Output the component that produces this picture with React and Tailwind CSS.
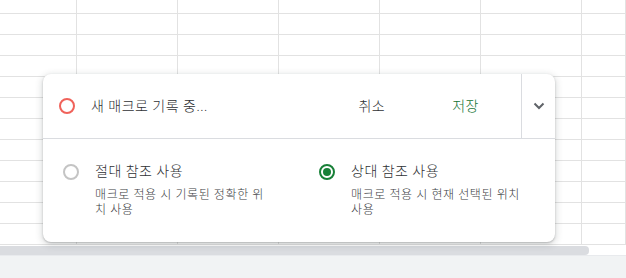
import React from 'react';

const COLS = [77, 101, 101, 101, 101, 101, 44];
const ROWS = 12;

function Grid() {
    return (
        <div className="flex flex-col">
            {Array.from({ length: ROWS }).map((_, r) => (
                <div key={r} className={`flex border-b border-[#e2e2e2] ${r === 0 ? 'h-[14px]' : 'h-[21px]'}`}>
                    {COLS.map((w, c) => (
                        <div key={c} style={{ width: w }} className="shrink-0 border-r border-[#e2e2e2]" />
                    ))}
                </div>
            ))}
        </div>
    );
}

function RadioOption({ checked, title, desc }) {
    return (
        <div className="flex w-[256px] shrink-0 items-start gap-4">
            <div className={`mt-[3px] flex h-4 w-4 shrink-0 items-center justify-center rounded-full border-2 ${checked ? 'border-[#188038]' : 'border-[#c4c4c4]'}`}>
                {checked && <div className="h-2 w-2 rounded-full bg-[#188038]" />}
            </div>
            <div className="w-[178px]">
                <div className="text-[14px] leading-5 tracking-[0.5px] text-[#2f3134]">{title}</div>
                <div className="mt-[7px] text-[12px] leading-[15px] tracking-[0.6px] text-[#3c4043]">{desc}</div>
            </div>
        </div>
    );
}

export default function App() {
    return (
        <div
            className="relative h-[278px] w-[626px] overflow-hidden bg-white font-light"
            style={{ fontFamily: 'Roboto, "Noto Sans CJK KR", sans-serif' }}
        >
            <Grid />
            {/* horizontal scrollbar */}
            <div className="h-[11px] border-b border-[#e8eaed] py-[1px]">
                <div className="h-[9px] w-[589px] rounded-r-[4px] bg-[#dadce0]" />
            </div>
            <div className="h-[40px] bg-[#f1f3f4]" />

            {/* macro recording dialog */}
            <div className="absolute left-[43px] top-[74px] w-[512px] rounded-lg bg-white shadow-[0_1px_2px_0_rgba(60,64,67,0.3),0_2px_6px_2px_rgba(60,64,67,0.15)]">
                <div className="flex h-[65px] items-center border-b border-[#dadce0]">
                    <div className="ml-4 h-4 w-4 shrink-0 rounded-full border-2 border-[#f0625a]" />
                    <div className="ml-4 text-[14px] tracking-[0.5px] text-[#2f3134]">새 매크로 기록 중...</div>
                    <button className="ml-auto text-[14px] tracking-[0.5px] text-[#2f3134]">취소</button>
                    <button className="ml-[67px] mr-[42px] text-[14px] tracking-[0.5px] text-[#137333]">저장</button>
                    <div className="flex h-full w-[34px] items-center justify-center border-l border-[#dadce0]">
                        <svg width="12" height="8" viewBox="0 0 12 8" fill="none">
                            <path d="M1.5 1.5L6 6L10.5 1.5" stroke="#5f6368" strokeWidth="2" />
                        </svg>
                    </div>
                </div>
                <div className="flex px-5 pb-[24px] pt-[22px]">
                    <RadioOption title="절대 참조 사용" desc="매크로 적용 시 기록된 정확한 위치 사용" />
                    <RadioOption checked title="상대 참조 사용" desc="매크로 적용 시 현재 선택된 위치 사용" />
                </div>
            </div>
        </div>
    );
}
